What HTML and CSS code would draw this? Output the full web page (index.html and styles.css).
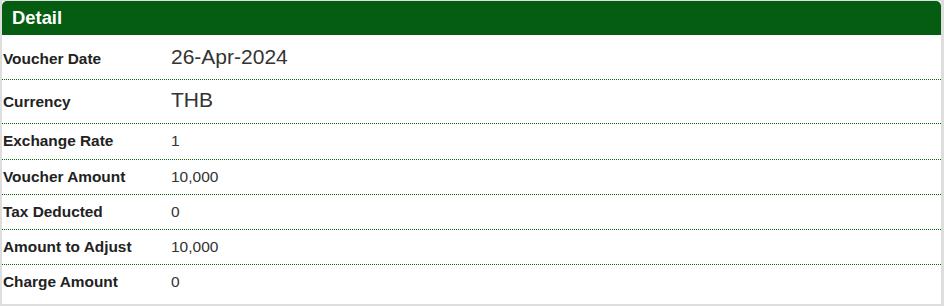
FILE: index.html
```html
<!DOCTYPE html>
<html lang="en">
  <head>
    <meta charset="UTF-8" />
    <meta name="viewport" content="width=device-width, initial-scale=1.0" />
    <title>Voucher Detail</title>
    <link rel="stylesheet" href="styles.css">
  </head>
  <body>
    <section class="panel">
      <div class="panel-head">Detail</div>
      <div class="detail">
        <div class="row row-big">
          <span class="label">Voucher Date</span>
          <span class="value">26-Apr-2024</span>
        </div>
        <div class="row row-big row-second">
          <span class="label">Currency</span>
          <span class="value">THB</span>
        </div>
        <div class="row row-first-small">
          <span class="label">Exchange Rate</span>
          <span class="value">1</span>
        </div>
        <div class="row">
          <span class="label">Voucher Amount</span>
          <span class="value">10,000</span>
        </div>
        <div class="row">
          <span class="label">Tax Deducted</span>
          <span class="value">0</span>
        </div>
        <div class="row">
          <span class="label">Amount to Adjust</span>
          <span class="value">10,000</span>
        </div>
        <div class="row row-last">
          <span class="label">Charge Amount</span>
          <span class="value">0</span>
        </div>
      </div>
    </section>
  </body>
</html>
```

FILE: styles.css
```css
/* Reset minimal */
* {
  margin: 0;
  padding: 0;
  box-sizing: border-box;
}

body {
  font-family: "Liberation Sans", Arial, sans-serif;
  background-color: #dedede;
  color: #222;
  padding: 1px 3px 2px 2px;
  height: 306px;
}

/* Panel */
.panel {
  background: #fff;
  height: 303px;
}

.panel-head {
  background: #045d10;
  color: #fff;
  font-weight: bold;
  font-size: 18.4px;
  height: 34px;
  line-height: 34px;
  padding-left: 10px;
  border-radius: 5px 5px 0 0;
}

/* Rows */
.row {
  display: flex;
  align-items: baseline;
  height: 35px;
  padding-top: 8px;
  border-bottom: 1px dotted #006400;
}
.row-big {
  height: 45px;
  padding-top: 10px;
}
.row-second {
  height: 44px;
  padding-top: 8px;
}
.row-first-small {
  height: 36px;
  padding-top: 8px;
}
.row-last {
  height: 39px;
  border-bottom: none;
}

.label {
  width: 169px;
  padding-left: 1px;
  font-weight: bold;
  font-size: 15.4px;
  color: #222;
}

.value {
  font-size: 15.5px;
  color: #333;
}
.row-big .value {
  font-size: 21px;
}
```
